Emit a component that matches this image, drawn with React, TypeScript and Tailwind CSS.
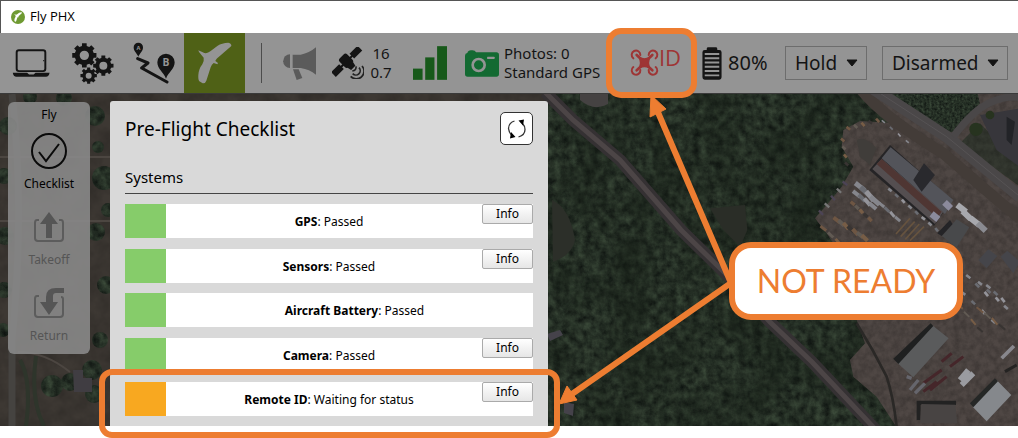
import type { ReactNode } from "react";

const INK = "#141414";

function gear(cx: number, cy: number, outer: number, inner: number, hole: number, teeth: number) {
  const step = (Math.PI * 2) / teeth;
  const at = (r: number, a: number) => `${(cx + r * Math.cos(a)).toFixed(1)} ${(cy + r * Math.sin(a)).toFixed(1)}`;
  let d = "";
  for (let i = 0; i < teeth; i++) {
    const a = i * step - Math.PI / 2;
    d += `${i === 0 ? "M" : "L"}${at(inner, a - step * 0.32)}L${at(outer, a - step * 0.24)}L${at(outer, a + step * 0.24)}L${at(inner, a + step * 0.32)}`;
  }
  return `${d}ZM${cx - hole} ${cy}a${hole} ${hole} 0 1 0 ${hole * 2} 0a${hole} ${hole} 0 1 0 ${-hole * 2} 0Z`;
}

function LaptopIcon() {
  return (
    <svg className="h-7 w-[38px]" viewBox="37 146 114 86" aria-hidden="true">
      <rect x="50" y="150" width="88" height="64" rx="7" fill="none" stroke={INK} strokeWidth="6" />
      <path d="M38 219H82L88 224H102L108 219H151Q149 231 140 231H49Q40 231 38 219Z" fill={INK} />
      <circle cx="133" cy="182" r="2" fill={INK} />
    </svg>
  );
}

function GearsIcon() {
  return (
    <svg className="h-[41px] w-[42px]" viewBox="215 128 126 123" fill={INK} fillRule="evenodd" aria-hidden="true">
      <path d={gear(252, 165, 37, 29, 14, 8)} />
      <path d={gear(309, 196, 31, 24, 12, 8)} />
      <path d={gear(265, 226, 25, 19, 9, 8)} />
    </svg>
  );
}

function PlanIcon() {
  return (
    <svg className="h-[42px] w-[42px]" viewBox="398 127 126 126" aria-hidden="true">
      <path d="M412 177L443 190L424 205L500 247" fill="none" stroke={INK} strokeWidth="9" strokeLinejoin="round" strokeLinecap="round" />
      <path d="M414 171C409 160 400 155 400 143A14 14 0 0 1 428 143C428 155 419 160 414 171Z" fill={INK} />
      <path d="M497 237C490 218 471 208 471 188A26 26 0 0 1 523 188C523 208 504 218 497 237Z" fill={INK} />
      <text x="414" y="150" textAnchor="middle" fontSize="17" fontWeight="700" fontFamily="Open Sans, sans-serif" fill="#949494">A</text>
      <text x="497" y="199" textAnchor="middle" fontSize="31" fontWeight="700" fontFamily="Open Sans, sans-serif" fill="#949494">B</text>
    </svg>
  );
}

function WingShape() {
  return (
    <path d="M594 152L612 160Q622 162 630 155L652 138Q664 130 684 129Q694 131 693 139L662 166Q646 178 645 184L653 190L651 194L640 190Q634 194 631 203L618 243Q615 252 607 251L597 245Q593 240 594 226Q595 208 606 194Q612 184 610 174L596 157Z" />
  );
}

function WingIcon() {
  return (
    <svg className="h-[42px] w-[34px]" viewBox="593 127 102 126" fill="#949494" aria-hidden="true">
      <WingShape />
    </svg>
  );
}

function AppLogo() {
  return (
    <svg className="size-[14px]" viewBox="0 0 42 42" aria-hidden="true">
      <circle cx="21" cy="21" r="21" fill="#6f9a32" />
      <g fill="#fff" transform="translate(21 21) scale(0.23) translate(-641 -190)">
        <WingShape />
      </g>
    </svg>
  );
}

function MegaphoneIcon() {
  return (
    <svg className="h-[33px] w-[35px]" viewBox="94 55 105 99" fill="#5b5b5b" aria-hidden="true">
      <path d="M118 77V118A20.500 20.500 0 0 1 118 77Z" />
      <path d="M126 78H150Q176 73 196 56V138Q176 122 150 118H126Z" />
      <path d="M127 122H144L155 148L138 154Z" />
    </svg>
  );
}

function SatelliteIcon() {
  return (
    <svg className="h-8 w-8" viewBox="245 58 96 96" aria-hidden="true">
      <g transform="rotate(-45 289 101)" fill={INK}>
        <rect x="233" y="91" width="34" height="20" />
        <rect x="311" y="91" width="34" height="20" />
        <rect x="264" y="98" width="50" height="6" />
        <rect x="273" y="80" width="32" height="37" rx="8" />
        <path d="M277 115H301L298 129H280Z" />
      </g>
      <g fill="none" stroke="#222" strokeWidth="5">
        <path d="M326 120A13 13 0 0 1 307 138" />
        <path d="M335 115A22 22 0 0 1 301 146" />
        <path d="M317 116Q319 128 306 130" />
      </g>
    </svg>
  );
}

function SignalIcon() {
  return (
    <svg className="h-[34px] w-[34px]" viewBox="489 54 103 102" fill="#17591a" role="img" aria-label="Signal">
      <rect x="489" y="122" width="29" height="34" />
      <rect x="526" y="88" width="28" height="68" />
      <rect x="562" y="54" width="30" height="102" />
    </svg>
  );
}

function CameraIcon() {
  return (
    <svg className="h-[27px] w-[34px]" viewBox="645 63 102 81" aria-hidden="true">
      <path d="M645 80Q645 73 652 72Q654 64 663 64H667Q676 64 678 70H739Q747 70 747 78V135Q747 143 739 143H653Q645 143 645 135Z" fill="#136a32" />
      <circle cx="686" cy="108" r="18" fill="none" stroke="#949494" strokeWidth="8" />
      <rect x="711" y="83" width="23" height="7" rx="2" fill="#949494" />
    </svg>
  );
}

function DroneIcon() {
  return (
    <svg className="size-[29px]" viewBox="387 85 87 87" fill="none" stroke="#9e3535" strokeLinecap="round" aria-hidden="true">
      <g strokeWidth="6">
        <path d="M397 116A13 13 0 1 1 418 106" />
        <path d="M443 106A13 13 0 1 1 464 116" />
        <path d="M397 142A13 13 0 1 0 418 151" />
        <path d="M443 151A13 13 0 1 0 464 142" />
      </g>
      <path d="M407 106L422 120M454 106L439 120M407 152L422 138M454 152L439 138" strokeWidth="8" />
      <path d="M416 114Q430 121 445 114Q440 129 445 144Q430 137 416 144Q421 129 416 114Z" fill="#9e3535" strokeWidth="4" />
    </svg>
  );
}

function BatteryIcon() {
  return (
    <svg className="h-[33px] w-5" viewBox="606 77 60 100" aria-hidden="true">
      <path d="M620 86V82Q620 78 625 78H647Q652 78 652 82V86H658Q665 86 665 93V169Q665 176 658 176H614Q607 176 607 169V93Q607 86 614 86Z" fill={INK} />
      <path d="M614 98.500H658M614 111H658M614 124H658M614 137H658M614 150H658M614 163H658" stroke="#949494" strokeWidth="6" />
    </svg>
  );
}

function Dropdown({ label, width, options }: { label: string; width: string; options: string[] }) {
  return (
    <div className={`relative ${width}`}>
      <select
        aria-label={label}
        className="h-[34px] w-full appearance-none rounded-none border border-[#6d6d6d] bg-transparent pl-[9px] text-[19px] text-[#141414]"
      >
        {options.map((o) => (
          <option key={o}>{o}</option>
        ))}
      </select>
      <svg className="pointer-events-none absolute right-[9px] top-[13px] h-2 w-3" viewBox="0 0 12 8" aria-hidden="true">
        <path d="M1 1H11L6 7Z" fill={INK} stroke={INK} strokeLinejoin="round" />
      </svg>
    </div>
  );
}

function Toolbar() {
  return (
    <header className="relative z-10 flex h-[61px] items-center border-b border-[#3a3a3a] bg-[#949494] pl-3 pr-[10px] text-[#141414]">
      <nav className="flex h-full items-center" aria-label="Views">
        <button aria-label="Application settings" className="mr-[22px]"><LaptopIcon /></button>
        <button aria-label="Vehicle setup" className="mr-[19px]"><GearsIcon /></button>
        <button aria-label="Plan" className="mr-[9px]"><PlanIcon /></button>
        <button aria-label="Fly" className="flex h-full w-[61px] items-center justify-center bg-[#4f6116]"><WingIcon /></button>
      </nav>
      <div className="ml-4 mr-5 h-10 w-px bg-[#4c4c4c]" />
      <button aria-label="Messages" className="mr-[15px]"><MegaphoneIcon /></button>
      <div className="flex items-center">
        <SatelliteIcon />
        <div className="w-[34px] text-center text-[15px]">
          <div className="leading-[19px]">16</div>
          <div className="leading-[19px]">0.7</div>
        </div>
      </div>
      <div className="ml-[15px] mr-[18px]"><SignalIcon /></div>
      <CameraIcon />
      <div className="ml-[5px] w-[102px] whitespace-nowrap text-[15px]">
        <div className="leading-[19px]">Photos: 0</div>
        <div className="leading-[19px]">Standard GPS</div>
      </div>
      <div className="relative flex h-[70px] w-[91px] shrink-0 justify-center rounded-[15px] border-[6px] border-[#ed7d31] pl-2 pt-[14px]">
        <DroneIcon />
        <span className="font-['Open_Sans',sans-serif] text-[22px] leading-[18px] text-[#9e3535]">ID</span>
      </div>
      <div className="ml-[5px] flex items-center gap-[6px]">
        <BatteryIcon />
        <span className="text-[20px]">80%</span>
      </div>
      <div className="ml-auto flex gap-[15px]">
        <Dropdown label="Flight mode" width="w-[82px]" options={["Hold"]} />
        <Dropdown label="Arm state" width="w-[126px]" options={["Disarmed"]} />
      </div>
    </header>
  );
}

function Tool({ label, disabled, children }: { label: string; disabled?: boolean; children: ReactNode }) {
  return (
    <button
      disabled={disabled}
      className={`flex h-[76px] w-full flex-col items-center justify-end gap-[7px] text-[12px] leading-[16px] ${disabled ? "text-[#555]" : "text-black"}`}
    >
      <span className="flex h-9 items-center">{children}</span>
      {label}
    </button>
  );
}

function ToolStrip() {
  return (
    <aside className="mt-2 w-[82px] rounded-[6px] bg-[#8b8b8be0] pb-[10px] pt-1 text-center">
      <div className="-mb-2 text-[12px] leading-[18px] text-black">Fly</div>
      <Tool label="Checklist">
        <svg className="size-9" viewBox="0 0 36 36" fill="none" stroke="#0a0a0a" strokeWidth="2" aria-hidden="true">
          <circle cx="18" cy="18" r="17" />
          <path d="M8 19L15 28L28 11" />
        </svg>
      </Tool>
      <Tool label="Takeoff" disabled>
        <svg className="h-[30px] w-8" viewBox="0 0 32 30" aria-hidden="true">
          <path d="M6 8H4Q2 8 2 11V26Q2 29 5 29H27Q30 29 30 26V11Q30 8 28 8H26" fill="none" stroke="#5c5c5c" strokeWidth="2" />
          <path d="M16 0L25 12H19V26H13V12H7Z" fill="#555" />
        </svg>
      </Tool>
      <Tool label="Return" disabled>
        <svg className="h-[30px] w-8" viewBox="0 0 32 30" aria-hidden="true">
          <path d="M6 8H4Q2 8 2 11V26Q2 29 5 29H27Q30 29 30 26V11Q30 9 28 9" fill="none" stroke="#5c5c5c" strokeWidth="2" />
          <path d="M31 0V5H23Q20 5 20 8V14H25L16 27L7 14H13V9Q13 0 23 0Z" fill="#555" />
        </svg>
      </Tool>
    </aside>
  );
}

type Check = { name: string; status: string; color: string; info: boolean; flagged?: boolean };

const checks: Check[] = [
  { name: "GPS", status: "Passed", color: "bg-[#86cc6a]", info: true },
  { name: "Sensors", status: "Passed", color: "bg-[#86cc6a]", info: true },
  { name: "Aircraft Battery", status: "Passed", color: "bg-[#86cc6a]", info: false },
  { name: "Camera", status: "Passed", color: "bg-[#86cc6a]", info: true },
  { name: "Remote ID", status: "Waiting for status", color: "bg-[#f8a820]", info: true, flagged: true },
];

function Checklist() {
  return (
    <section className="mt-[7px] w-[438px] rounded-t-[3px] bg-[#d9d9d9] px-[15px] pb-[10px] pt-[11px] text-black">
      <div className="flex items-center justify-between">
        <h1 className="text-[19px] leading-[26px]">Pre-Flight Checklist</h1>
        <button aria-label="Reset checklist" className="flex size-[33px] items-center justify-center rounded-[5px] border border-[#333] bg-white">
          <svg className="size-5" viewBox="0 0 20 20" aria-hidden="true">
            <path d="M7.500 2Q1.500 4 1.500 9.500Q2 13 4 15.500M11.500 18Q18 16 18 10.500Q18 7 15.500 4.500" fill="none" stroke="#333" strokeWidth="1.300" />
            <path d="M11.500 1.500L17 0.500L16 6.500ZM4 13L8.500 18L3 19.500Z" fill="#000" />
          </svg>
        </button>
      </div>
      <h2 className="mt-5 border-b border-[#444] pb-1 text-[15px] leading-6">Systems</h2>
      <ul className="mt-[10px] flex h-[212px] flex-col justify-between">
        {checks.map((c) => (
          <li key={c.name} className="relative flex h-[34px] bg-white text-[12px] leading-[18px]">
            <span className={`w-[41px] ${c.color}`} />
            <span className="flex-1 self-center pl-[10px] pt-[2px] text-center">
              <b>{c.name}</b>: {c.status}
            </span>
            {c.info && (
              <button className="h-5 w-[51px] rounded-[2px] border border-[#aaa] bg-linear-to-b from-white to-[#e6e6e6]">
                Info
              </button>
            )}
            {c.flagged && (
              <span className="pointer-events-none absolute -bottom-[22px] -left-[26px] -right-[27px] -top-[13px] rounded-[13px] border-[6px] border-[#ed7d31]" />
            )}
          </li>
        ))}
      </ul>
    </section>
  );
}

function vehicles(x: number, y: number, dx: number, dy: number, n: number, w: number, h: number, fills: string[]) {
  return Array.from({ length: n }, (_, i) => (
    <rect
      key={`${x}-${y}-${i}`}
      x={-w / 2}
      y={-h / 2}
      width={w}
      height={h}
      fill={fills[i % fills.length]}
      transform={`translate(${x + dx * i} ${y + dy * i}) rotate(${38 + ((i * 7) % 5) * 3})`}
    />
  ));
}

const TREES = [
  [8, 126, 9], [4, 176, 8], [5, 236, 9], [4, 290, 8], [3, 330, 7], [95, 116, 10], [98, 147, 6], [104, 178, 12], [96, 232, 9],
  [106, 285, 9], [64, 98, 8], [92, 370, 10], [52, 386, 11], [70, 382, 9], [94, 394, 9], [100, 340, 8], [108, 210, 7], [30, 97, 7],
];

function SatelliteMap() {
  const white = ["#85868c", "#6a6c72", "#94949a"];
  const tan = ["#6e5643", "#615a53", "#775d46", "#383432"];
  return (
    <svg
      className="absolute inset-0 h-full w-full"
      viewBox="0 94 1018 332"
      preserveAspectRatio="xMidYMid slice"
      role="img"
      aria-label="Satellite map"
    >
      <defs>
        <filter id="canopy" x="0" y="0" width="100%" height="100%" colorInterpolationFilters="sRGB">
          <feTurbulence type="fractalNoise" baseFrequency="0.13" numOctaves="5" seed="23" />
          <feColorMatrix values="0.200 0.060 0 0 0.015  0.240 0.080 0 0 0.025  0.180 0.060 0 0 0.025  0 0 0 0 1" />
          <feComposite in2="SourceGraphic" operator="in" />
        </filter>
        <filter id="shade" x="0" y="0" width="100%" height="100%" colorInterpolationFilters="sRGB">
          <feTurbulence type="fractalNoise" baseFrequency="0.023" numOctaves="3" seed="5" />
          <feColorMatrix values="0 0 0 0 0.080  0 0 0 0 0.110  0 0 0 0 0.080  1.200 0 0 0 -0.450" />
          <feComposite in2="SourceGraphic" operator="in" />
        </filter>
        <filter id="soil" x="0" y="0" width="100%" height="100%" colorInterpolationFilters="sRGB">
          <feTurbulence type="fractalNoise" baseFrequency="0.05" numOctaves="4" seed="9" result="n" />
          <feColorMatrix in="n" values="0 0 0 0 0  0 0 0 0 0  0 0 0 0 0  0.400 0 0 0 -0.130" />
          <feComposite in2="SourceGraphic" operator="in" result="d" />
          <feMerge>
            <feMergeNode in="SourceGraphic" />
            <feMergeNode in="d" />
          </feMerge>
        </filter>
      </defs>
      <rect y="94" width="1018" height="332" fill="#252d25" filter="url(#canopy)" />
      <rect y="94" width="1018" height="332" filter="url(#shade)" />
      <path d="M0 94H545V426H0Z" fill="#3d3833" filter="url(#soil)" />
      <path d="M12 94C22 180 20 260 12 340V426" stroke="#454340" strokeWidth="7" fill="none" />
      <path d="M0 157H111M0 221H111M18 352Q45 352 70 372" stroke="#4c4641" strokeWidth="2" fill="none" />
      <path d="M20 360Q32 380 26 426M36 356Q30 400 44 426" stroke="#2e352b" strokeWidth="4" fill="none" />
      <g filter="url(#canopy)">
        {TREES.map(([x, y, r]) => (
          <circle key={`${x}-${y}`} cx={x} cy={y} r={r} />
        ))}
      </g>
      <path d="M73 370H83V378H92V392H74Z" fill="#403d42" />
      <path d="M552 200Q570 208 575 240Q572 255 553 262Z" fill="#2c2f29" />
      <path d="M580 94H608V104Q594 112 580 100Z" fill="#454242" />
      <path d="M547 334L560 330L563 335L550 341ZM564 402L574 404L573 416L564 413Z" fill="#45424a" />
      <path d="M545 92L573 120L620 160L681 230L727 275L770 322L812 362L876 430" fill="none" stroke="#353133" strokeWidth="12" />
      <path d="M545 92L573 120L620 160L681 230L727 275L770 322L812 362L876 430" fill="none" stroke="#4c4546" strokeWidth="5" />
      <g transform="translate(660 90) scale(0.3333)">
        <path
          d="M600 0L690 98L600 93L550 120L545 170L580 230L545 290L500 345L465 385L500 430L560 520L590 690L615 760L570 810L580 860L650 920L710 1012H1080V0Z"
          fill="#4f4744"
          filter="url(#soil)"
        />
        <path d="M150 355L255 345L262 420L240 470L190 420Z" fill="#2a2d27" />
        <path d="M655 0H950L960 40L880 125L840 130Z" fill="#2b3029" filter="url(#canopy)" />
        <path d="M900 160L960 100L1080 220V290Z" fill="#343830" filter="url(#soil)" />
        <path d="M960 75L1080 55V232L1010 180Z" fill="#37363b" />
        <path d="M1040 80L1065 95L1055 165L1040 150Z" fill="#222327" />
        <path d="M590 -20Q650 70 850 190L1030 345L1080 385" fill="none" stroke="#433c38" strokeWidth="34" />
        <path d="M630 -10L860 140L1080 320" fill="none" stroke="#4a4748" strokeWidth="36" />
        <path d="M630 -10L860 140L1080 320" fill="none" stroke="#5c595a" strokeWidth="2" />
        <path d="M880 140Q940 60 990 38T1080 22" fill="none" stroke="#4a4748" strokeWidth="22" />
        <circle cx="948" cy="118" r="20" fill="#27331f" />
        <circle cx="990" cy="75" r="13" fill="#27331f" />
        <path d="M590 700Q640 780 680 860Q700 920 710 1010" fill="none" stroke="#2a2826" strokeWidth="8" />
        <path d="M590 150Q615 135 650 175L630 225L600 200Z" fill="#403d3a" />
        <path d="M628 240L690 165L876 330L822 408Z" fill="#252426" />
        <path d="M665 205L692 172L880 330L855 372Z" fill="#53545a" />
        <path d="M637 237L665 207L850 365L825 402Z" fill="#544e50" />
        <path d="M650 222L665 207L845 365L832 384Z" fill="#4f3633" />
        <path d="M760 270L792 220L825 255L785 305Z" fill="#29292d" />
        <path d="M845 438L890 388L928 412L890 472Z" fill="#48494b" />
        <path d="M845 438L878 402L870 390L832 430Z" fill="#242427" />
        <path d="M955 510L985 478L1012 498L980 535ZM1022 500L1042 482L1080 515L1060 550Z" fill="#45454a" />
        <path d="M708 815L815 704L866 745L760 862Z" fill="#5a5b5c" />
        <path d="M700 806L812 700L820 708L715 822Z" fill="#1f2020" />
        <path d="M938 950L1012 872L1054 915L980 994Z" fill="#85888c" />
        <path d="M930 940L1005 865L1014 874L940 952Z" fill="#252726" />
        <path d="M770 932H888V945H782V990H770Z" fill="#222" />
        <path d="M784 942L886 944L892 1000H780Z" fill="#484443" />
        {vehicles(600, 290, 15, 14, 4, 36, 15, white)}
        {vehicles(590, 312, 16, 12, 4, 28, 12, white)}
        {vehicles(578, 340, 13, 12, 5, 15, 10, tan)}
        {vehicles(530, 390, 14, 9, 7, 24, 12, tan)}
        {vehicles(665, 345, 16, 14, 4, 20, 9, white)}
        {vehicles(690, 300, 20, 17, 8, 13, 8, white)}
        <path d="M708 432L750 385M722 440L764 395M736 448L778 402M750 452L792 410" stroke="#66533f" strokeWidth="5" />
        {vehicles(490, 415, 22, 20, 3, 22, 9, tan)}
        {vehicles(905, 355, 15, 20, 2, 34, 18, ["#a7a8ad"])}
        {vehicles(945, 395, 20, 16, 2, 34, 18, ["#a7a8ad", "#8a8b91"])}
        {vehicles(825, 380, 38, -34, 2, 26, 20, ["#8b8a9c"])}
        {vehicles(925, 560, 27, 26, 3, 16, 8, white)}
        {vehicles(910, 610, 30, 28, 4, 15, 8, white)}
        {vehicles(960, 580, 26, 24, 4, 15, 8, white)}
        {vehicles(985, 590, 22, 20, 3, 16, 8, white)}
        {vehicles(900, 650, 20, 23, 4, 22, 6, tan)}
        {vehicles(960, 660, 22, 17, 4, 26, 6, tan)}
        {vehicles(565, 115, 22, -6, 5, 14, 8, tan)}
        {vehicles(548, 150, 4, 24, 4, 13, 8, tan)}
        {vehicles(670, 95, 24, 20, 4, 12, 5, white)}
        {vehicles(555, 280, -18, 22, 5, 18, 7, ["#4c4455", "#777"])}
        <g stroke="#45262a" strokeWidth="9">
          <path d="M790 880L845 840M810 900L860 860M845 815L875 790M870 830L910 800M790 905L830 875" />
        </g>
        <path d="M750 900L775 870M765 910L795 880M740 860L755 865" stroke="#65656c" strokeWidth="10" />
        <path d="M905 885L940 850M900 870L925 840" stroke="#9a9ba0" strokeWidth="17" />
        <path d="M1025 805L1062 768" stroke="#88878d" strokeWidth="11" />
        <path d="M1035 845L1070 825" stroke="#242322" strokeWidth="9" />
      </g>
    </svg>
  );
}

function Annotation() {
  return (
    <div className="pointer-events-none absolute left-0 top-0 z-20">
      <svg className="absolute left-[550px] top-[90px] h-[330px] w-[190px]" viewBox="550 90 190 330" aria-hidden="true">
        <path d="M657 110L731 283L572 394" fill="none" stroke="#ed7d31" strokeWidth="6" />
        <path d="M651 95L666 109L650 117ZM559 404L567 386L577 400Z" fill="#ed7d31" stroke="#ed7d31" />
      </svg>
      <div className="absolute left-[729px] top-[242px] flex h-[78px] w-[234px] items-center justify-center whitespace-nowrap rounded-[22px] border-[6px] border-[#ed7d31] bg-white font-['Lato',sans-serif] text-[32px] text-[#ed7d31]">
        NOT READY
      </div>
    </div>
  );
}

export default function App() {
  return (
    <div className="relative w-full bg-white pb-3 font-['Noto_Sans',sans-serif]">
      <div className="flex h-[33px] items-center gap-[5px] border-l border-t border-[#555] pl-[10px] font-['Open_Sans',sans-serif] text-[13px] text-black">
        <AppLogo />
        Fly PHX
      </div>
      <Toolbar />
      <main className="relative bg-[#2a2e29]">
        <SatelliteMap />
        <div className="relative flex items-start gap-5 pl-2">
          <ToolStrip />
          <Checklist />
        </div>
      </main>
      <Annotation />
    </div>
  );
}
